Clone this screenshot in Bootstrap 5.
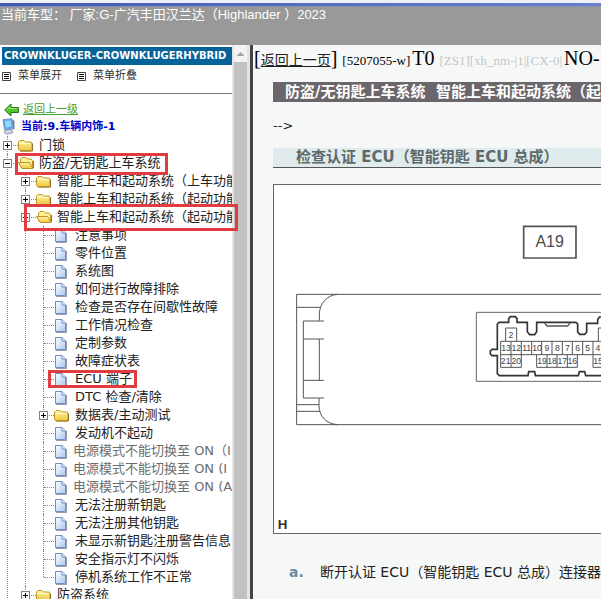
<!DOCTYPE html>
<html lang="zh-CN">
<head>
<meta charset="utf-8">
<meta name="viewport" content="width=device-width, initial-scale=1">
<title>Highlander 2023</title>
<link href="https://cdn.jsdelivr.net/npm/bootstrap@5.3.0/dist/css/bootstrap.min.css" rel="stylesheet">
<style>
body { font-family: "DejaVu Sans", "Noto Sans CJK SC", sans-serif; font-size: 13px; line-height: 18px; color: #222; }
a { color: inherit; text-decoration: none; }
.topbar { height: 45px; background: #999; border-top: 3px solid #eef1f8; font-family: "Liberation Sans", "Noto Sans CJK SC", sans-serif; color: #fff; }
.topbar::before { content: ""; display: block; height: 4px; background: linear-gradient(90deg, #4059b5, #6b80cc); border-bottom: 1px solid #8791b4; }
.topbar div { line-height: 16px; padding-left: 1px; }
.symbols { position: absolute; width: 0; height: 0; }
.side { width: 232px; }
.brandbar { background: #066399; color: #fff; font-weight: bold; font-size: 10px; margin: 2px 0 0 2px; padding-left: 2px; }
.tools { font-size: 11px; height: 22px; margin-bottom: 6px; padding-left: 2px; gap: 15px; }
.tools button { font-size: 11px; color: #333; gap: 7px; }
.rule { border-top: 1px solid #777; margin-bottom: 8px; }
.back { font-size: 11px; line-height: 16px; color: #43a02c; }
.current { font-size: 11px; line-height: 16px; color: #00c; }
.tree, .tree ul { list-style: none; margin: 0; padding: 0; }
.tree { padding-top: 1px; }
.tree ul { padding-left: 18px; }
.tree li { position: relative; }
.tree li::before { content: ""; position: absolute; left: 7px; top: 0; bottom: 0; border-left: 1px dotted #888; }
.tree li.end::before { bottom: 9px; }
.node { position: relative; height: 18px; display: flex; align-items: center; }
.node::before { content: ""; position: absolute; left: 8px; width: 10px; top: 9px; border-top: 1px dotted #888; }
.node svg { position: relative; flex: none; width: 17px; height: 16px; margin-left: 18px; }
.node button + svg { margin-left: 6px; }
.node a { flex: 1 1 0; min-width: 0; overflow: hidden; margin-left: 4px; }
.dim a { color: #6d6d6d; margin-left: 2px; }
.toggle { position: relative; flex: none; width: 9px; height: 9px; margin-left: 3px; padding: 0; border: 1px solid #808080; background: #fff; }
.toggle::before { content: ""; position: absolute; left: 1px; top: 3px; width: 5px; height: 1px; background: #000; }
.toggle.plus::after { content: ""; position: absolute; left: 3px; top: 1px; width: 1px; height: 5px; background: #000; }
.frame { position: absolute; z-index: 2; border: 3px solid #e33c40; pointer-events: none; }
.f-system { left: 15px; top: -1px; width: 153px; height: 22px; }
.f-start { left: 6px; right: -6px; top: -4px; height: 27px; }
.f-ecu { left: 12px; top: 0; width: 89px; height: 18px; }
.scroller { width: 18px; background: #e4e4e4; padding-left: 2px; padding-right: 3px; }
.scroller svg { display: block; height: 17px; background: #f3f3f3; }
.thumb { background: #c1c1c1; }
.content { background: #f6f8f8; border-left: 3px solid #454545; }
.topline { font-family: "Liberation Serif", "Noto Sans CJK SC", serif; font-size: 20px; line-height: 26px; color: #000; padding-left: 1px; }
.topline a { font-size: 14px; text-decoration: underline; color: #222; }
.code { font-size: 13px; margin-right: 2px; }
.faint { font-size: 13px; color: #c4c6c6; margin-right: 2px; }
.inner { margin-left: 20px; }
.titlebar { background: #6b666b; color: #fff; font-size: 15px; line-height: 20px; font-weight: bold; margin: 8px 0 15px; padding-left: 12px; }
.subtitle { background: #dfebed; color: #5e6969; border-bottom: 1px solid #555; font-size: 15px; line-height: 19px; font-weight: bold; padding-left: 23px; margin: 13px 0 16px; }
.figure-box { background: #fff; border: 1px solid #666; border-right: 0; overflow: hidden; }
.figure-box svg { display: block; }
.step { font-size: 14px; line-height: 20px; margin: 28px 0 0 16px; }
.step b { width: 32px; color: #6d8aa3; }
</style>
<script src="https://cdn.jsdelivr.net/npm/bootstrap@5.3.0/dist/js/bootstrap.bundle.min.js"></script>
</head>
<body class="vh-100 overflow-hidden d-flex flex-column text-nowrap">
<svg class="symbols">
  <defs>
    <linearGradient id="gold" x1="0" y1="0" x2="0" y2="1"><stop offset="0" stop-color="#fff6a8"/><stop offset="1" stop-color="#efc63a"/></linearGradient>
    <linearGradient id="ice" x1="0" y1="0" x2="1" y2="1"><stop offset="0" stop-color="#fff"/><stop offset="1" stop-color="#a9c9f3"/></linearGradient>
  </defs>
  <symbol id="folder" viewBox="0 0 17 16"><path d="M.5 12.500V5L2 3.500h4L7.500 5H13l1 1v7l-1 1H2z" fill="url(#gold)" stroke="#c19a22"/><path d="M14.500 6.500V14h-12" fill="none" stroke="#8c742e"/><path d="M1.500 6.500h11" stroke="#fffbd0"/></symbol>
  <symbol id="open" viewBox="0 0 17 16"><path d="M2.500 12V4L4 2.500h4L9.500 4H13l1.500 1.500V12" fill="#fff09a" stroke="#c19a22"/><path d="M.5 7.500h11l3.500 6H4z" fill="url(#gold)" stroke="#b8941f"/><path d="M15.500 6v7" stroke="#8c742e"/></symbol>
  <symbol id="page" viewBox="0 0 17 16"><path d="M1.500 2.500H8L11.500 6v8.500h-10z" fill="url(#ice)" stroke="#6f8fc4"/><path d="M8 2.500V6h3.500" fill="#e4effd" stroke="#6f8fc4"/><path d="M12.500 6v9.500H2" fill="none" stroke="#6b7188" stroke-opacity=".7"/></symbol>
  <symbol id="lines" viewBox="0 0 9 9"><path d="M.5.5h8v8h-8z" fill="#fff" stroke="#444"/><path d="M2 2.500h5M2 4.500h5M2 6.500h5" stroke="#111"/></symbol>
</svg>

<header class="topbar flex-shrink-0"><div>当前车型： 厂家:G-广汽丰田汉兰达（Highlander ）2023</div></header>

<div class="d-flex flex-grow-1" style="min-height:0">
  <aside class="side flex-shrink-0 position-relative">
    <div class="brandbar overflow-hidden">CROWNKLUGER-CROWNKLUGERHYBRID</div>
    <div class="tools d-flex align-items-center">
      <button class="border-0 bg-transparent p-0 d-flex align-items-center"><svg width="9" height="9"><use href="#lines"/></svg>菜单展开</button>
      <button class="border-0 bg-transparent p-0 d-flex align-items-center"><svg width="9" height="9"><use href="#lines"/></svg>菜单折叠</button>
    </div>
    <div class="rule"></div>
    <div class="back d-flex align-items-center ps-1">
      <svg width="15" height="14" class="me-1"><path d="M.7 7 7 1v3.500h7.300v5H7V13z" fill="#52c52c" stroke="#1d7412"/><path d="M3 6.500 6 3.800v1.700h7" fill="none" stroke="#a5ec86"/></svg>
      <a href="#" class="text-decoration-underline">返回上一级</a>
    </div>
    <div class="current d-flex align-items-center fw-bold">
      <svg width="17" height="17" class="me-1"><path d="M3 1.500 12 .8l1.500 10L4.500 12z" fill="#58aef0" stroke="#8595b8"/><path d="m5 3 5.500-.5.800 6L6 9.500z" fill="#9ad6ff"/><path d="M12.500 1.500 14.500 3v8.500l-1 0z" fill="#707a9e"/><path d="m6 12 5-.5 2 3-6 1.800-3-2z" fill="#d5d9e6" stroke="#8c93b0"/></svg>
      <span>当前:9.车辆内饰-1</span>
    </div>
    <ul class="tree">
      <li><div class="node"><button class="toggle plus" aria-label="展开"></button><svg><use href="#folder"/></svg><a href="#">门锁</a></div></li>
      <li><div class="node"><button class="toggle" aria-label="折叠"></button><svg><use href="#open"/></svg><a href="#">防盗/无钥匙上车系统</a><span class="frame f-system"></span></div>
        <ul>
          <li><div class="node"><button class="toggle plus" aria-label="展开"></button><svg><use href="#folder"/></svg><a href="#">智能上车和起动系统（上车功能）</a></div></li>
          <li><div class="node"><button class="toggle plus" aria-label="展开"></button><svg><use href="#folder"/></svg><a href="#">智能上车和起动系统（起动功能）</a></div></li>
          <li><div class="node"><button class="toggle" aria-label="折叠"></button><svg><use href="#open"/></svg><a href="#">智能上车和起动系统（起动功能）</a><span class="frame f-start"></span></div>
            <ul>
              <li><div class="node"><svg><use href="#page"/></svg><a href="#">注意事项</a></div></li>
              <li><div class="node"><svg><use href="#page"/></svg><a href="#">零件位置</a></div></li>
              <li><div class="node"><svg><use href="#page"/></svg><a href="#">系统图</a></div></li>
              <li><div class="node"><svg><use href="#page"/></svg><a href="#">如何进行故障排除</a></div></li>
              <li><div class="node"><svg><use href="#page"/></svg><a href="#">检查是否存在间歇性故障</a></div></li>
              <li><div class="node"><svg><use href="#page"/></svg><a href="#">工作情况检查</a></div></li>
              <li><div class="node"><svg><use href="#page"/></svg><a href="#">定制参数</a></div></li>
              <li><div class="node"><svg><use href="#page"/></svg><a href="#">故障症状表</a></div></li>
              <li><div class="node"><svg><use href="#page"/></svg><a href="#">ECU 端子</a><span class="frame f-ecu"></span></div></li>
              <li><div class="node"><svg><use href="#page"/></svg><a href="#">DTC 检查/清除</a></div></li>
              <li><div class="node"><button class="toggle plus" aria-label="展开"></button><svg><use href="#folder"/></svg><a href="#">数据表/主动测试</a></div></li>
              <li><div class="node"><svg><use href="#page"/></svg><a href="#">发动机不起动</a></div></li>
              <li><div class="node dim"><svg><use href="#page"/></svg><a href="#">电源模式不能切换至 ON（I</a></div></li>
              <li><div class="node dim"><svg><use href="#page"/></svg><a href="#">电源模式不能切换至 ON (I</a></div></li>
              <li><div class="node dim"><svg><use href="#page"/></svg><a href="#">电源模式不能切换至 ON (A</a></div></li>
              <li><div class="node"><svg><use href="#page"/></svg><a href="#">无法注册新钥匙</a></div></li>
              <li><div class="node"><svg><use href="#page"/></svg><a href="#">无法注册其他钥匙</a></div></li>
              <li><div class="node"><svg><use href="#page"/></svg><a href="#">未显示新钥匙注册警告信息</a></div></li>
              <li><div class="node"><svg><use href="#page"/></svg><a href="#">安全指示灯不闪烁</a></div></li>
              <li class="end"><div class="node"><svg><use href="#page"/></svg><a href="#">停机系统工作不正常</a></div></li>
            </ul>
          </li>
          <li><div class="node"><button class="toggle plus" aria-label="展开"></button><svg><use href="#folder"/></svg><a href="#">防盗系统</a></div></li>
        </ul>
      </li>
    </ul>
  </aside>
  <div class="scroller flex-shrink-0 d-flex flex-column">
    <svg width="13" height="17"><path d="M2.500 11 6.500 7l4 4z" fill="#a3a3a3"/></svg>
    <div class="thumb flex-grow-1"></div>
  </div>

  <main class="content flex-grow-1 overflow-hidden" style="min-width:0">
    <div class="topline">[<a href="#">返回上一页</a>] <span class="code">[5207055-w]</span>T0 <span class="faint">[ZS1][xh_nm-|1|[CX-0|</span>NO-</div>
    <div class="inner">
      <h1 class="titlebar">防盗/无钥匙上车系统&nbsp; 智能上车和起动系统（起动功能）</h1>
      <div>--&gt;</div>
      <h2 class="subtitle">检查认证 ECU（智能钥匙 ECU 总成）</h2>
      <div class="figure-box">
        <svg width="600" height="348" viewBox="27 15 1800 1044" fill="none" stroke="#555" stroke-width="3" font-family="Liberation Sans, sans-serif">
          <path d="M776 139h157v95H776z" stroke-width="5"/>
          <text x="854" y="202" font-size="48" text-anchor="middle" fill="#4a4a4a" stroke="none">A19</text>
          <path d="M1800 343H95v391h1705M95 382h71M95 674h67M95 694h69M218 343c-33 2-55 29-55 61v18M177 423h-62v231h62M115 477h62M163 477v123M115 601h62M162 654v22c0 34 23 56 56 58"/>
          <path d="M1800 397H634v207h1166" stroke="#666"/>
          <path d="M1100 430h-69v-8l-6-11h-22l-5 8v11h-33v26l-6 7h-15l-6-7v-24l-5-5H815v28l-6 9h-15l-7-9v-28h-31v-11l-5-6h-15l-5 6v11h-29l-5 5v76h-16l-5 5v9l5 5h16v54l6 6h86l2-12h18l2 12h129l3-12h16l3 12h152" stroke="#333" stroke-width="5"/>
          <path d="M838 428l8 10h62l8-10" stroke-width="4"/>
          <path d="M722 484v-40h33v40M1000 484v-40h33v40M707 484h400M707 484v78h62v-78M707 524h400M738 484v78M800 484v40M830 484v40M861 484v40M892 484v40M922 484v40M953 484v40M984 484v78h33M815 524v38h122v-38M846 524v38M876 524v38M907 524v38"/>
          <g fill="#444" stroke="none" font-size="26" text-anchor="middle">
            <text x="738" y="473">2</text>
            <text x="723" y="513">13</text><text x="754" y="513">12</text><text x="785" y="513">11</text><text x="816" y="513">10</text><text x="846" y="513">9</text><text x="877" y="513">8</text><text x="907" y="513">7</text><text x="938" y="513">6</text><text x="968" y="513">5</text><text x="999" y="513">4</text>
            <text x="722" y="552">21</text><text x="754" y="552">20</text><text x="831" y="552">19</text><text x="861" y="552">18</text><text x="892" y="552">17</text><text x="922" y="552">16</text><text x="999" y="552">15</text>
          </g>
          <text x="38" y="1047" font-size="40" font-weight="bold" fill="#333" stroke="none">H</text>
        </svg>
      </div>
      <div class="step d-flex"><b>a.</b><span>断开认证 ECU（智能钥匙 ECU 总成）连接器</span></div>
    </div>
  </main>
</div>
</body>
</html>
